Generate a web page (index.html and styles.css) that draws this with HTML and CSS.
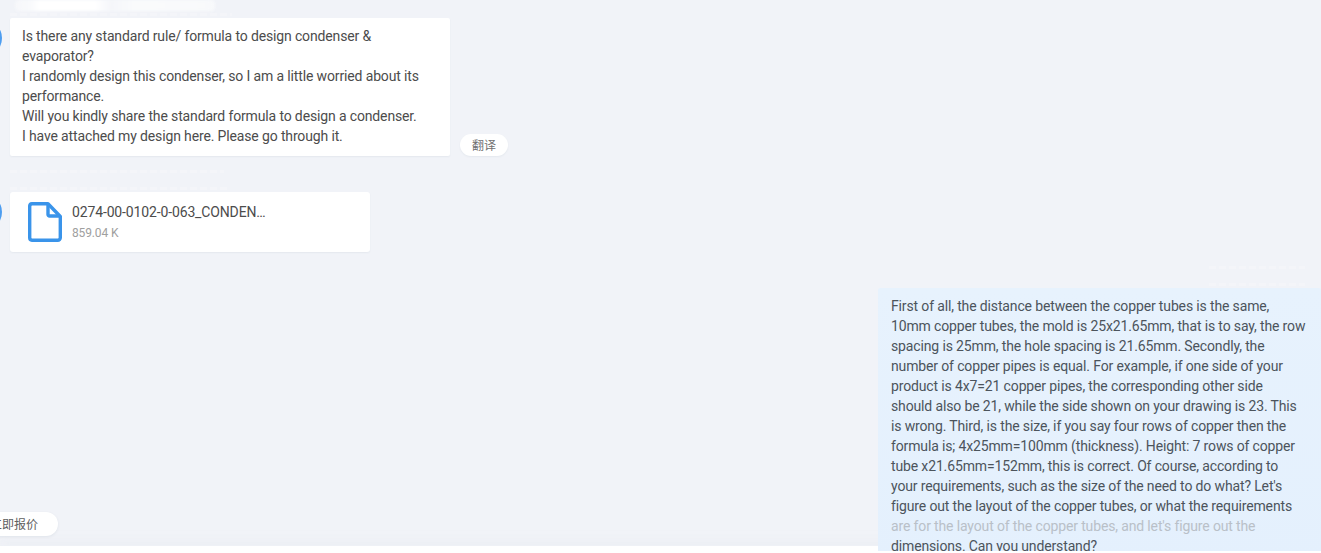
FILE: index.html
```html
<!DOCTYPE html>
<html lang="en">
<head>
<meta charset="utf-8">
<title>Chat</title>
<link rel="stylesheet" href="styles.css">
</head>
<body>
<div class="app">
  <div class="chat">
    <div class="redacted"></div>
    <div class="meta meta-first"></div>
    <div class="row">
      <span class="avatar"></span>
      <div class="bubble bubble-in">Is there any standard rule/ formula to design condenser &amp; evaporator?<br>I randomly design this condenser, so I am a little worried about its performance.<br>Will you kindly share the standard formula to design a condenser.<br>I have attached my design here. Please go through it.</div>
      <button class="translate" type="button">翻译</button>
    </div>
    <div class="meta meta-a"></div>
    <div class="meta meta-b"></div>
    <div class="row">
      <span class="avatar"></span>
      <div class="file-card">
        <svg class="file-icon" viewBox="0 0 34 40" aria-hidden="true">
          <path d="M4 1.700H20L32.300 14.500V35.800a2.500 2.500 0 0 1-2.500 2.500H4A2.500 2.500 0 0 1 1.700 35.800V4A2.500 2.500 0 0 1 4 1.700Z"/>
          <path d="M20 2V12.500A1.500 1.500 0 0 0 21.500 14H32"/>
        </svg>
        <div class="file-info">
          <div class="file-name">0274-00-0102-0-063_CONDEN…</div>
          <div class="file-size">859.04 K</div>
        </div>
      </div>
    </div>
    <div class="meta meta-r1"></div>
    <div class="meta meta-r2"></div>
    <div class="row row-out">
      <div class="bubble bubble-out">First of all, the distance between the copper tubes is the same, 10mm copper tubes, the mold is 25x21.65mm, that is to say, the row spacing is 25mm, the hole spacing is 21.65mm. Secondly, the number of copper pipes is equal. For example, if one side of your product is 4x7=21 copper pipes, the corresponding other side should also be 21, while the side shown on your drawing is 23. This is wrong. Third, is the size, if you say four rows of copper then the formula is; 4x25mm=100mm (thickness). Height: 7 rows of copper tube x21.65mm=152mm, this is correct. Of course, according to your requirements, such as the size of the need to do what? Let's figure out the layout of the copper tubes, or what the requirements <span class="faded">are for the layout of the copper tubes, and let's figure out the</span> dimensions. Can you understand?</div>
    </div>
  </div>
  <button class="quote" type="button">立即报价</button>
  <div class="composer"></div>
</div>
</body>
</html>
```

FILE: styles.css
```css
* { box-sizing: border-box; }

html, body {
  margin: 0;
  height: 100%;
  overflow: hidden;
}

body {
  background: #f1f3f8;
  color: #4c4c4c;
  font-family: Roboto, "Noto Sans CJK SC", sans-serif;
  font-size: 14px;
  line-height: 20px;
  letter-spacing: -0.14px;
}

.app {
  position: relative;
  height: 553px;
  overflow: hidden;
}

.chat {
  position: relative;
  z-index: 1;
  display: flex;
  flex-direction: column;
  height: 551px;
  overflow: hidden;
}

.redacted {
  flex: none;
  width: 200px;
  height: 11px;
  margin-left: 15px;
  border-radius: 4px;
  background: linear-gradient(90deg, #f6f7fa 0, #f9fafc 8%, #ffffff 12%, #ffffff 40%, #f5f6fa 48%, #fafbfc 60%, #f8f9fb 100%);
  filter: blur(1.500px);
}

.meta {
  flex: none;
  height: 3px;
  background: repeating-linear-gradient(90deg, #f4f5f9 0 7px, #f1f3f8 7px 10px);
}

.meta-first { width: 222px; margin: 2px 0 2px 10px; }
.meta-a { width: 214px; margin: 14px 0 0 10px; }
.meta-b { width: 220px; margin: 14px 0 2px 10px; }
.meta-r1 { width: 96px; margin: 14px 16px 0 auto; }
.meta-r2 { width: 96px; margin: 14px 16px 2px auto; }

.row {
  display: flex;
  flex: none;
  align-items: flex-start;
  margin-left: -34px;
}

.row-out {
  justify-content: flex-end;
}

.avatar {
  flex: none;
  width: 36px;
  height: 36px;
  margin: 2px 8px 0 0;
  border-radius: 50%;
  background: #4d9df0;
}

.bubble {
  padding: 8px 12px 10px;
  overflow-wrap: break-word;
}

.bubble-in {
  width: 440px;
  border-radius: 2px;
  background: #fff;
  box-shadow: 0 1px 2px rgba(40, 60, 90, .06);
}

.bubble-out {
  width: 443px;
  padding: 8px 14px 10px 13px;
  border-radius: 2px;
  background: linear-gradient(180deg, #e7f2fd 0, #e4f0fd 100%);
  color: #4c545c;
}

.faded {
  color: #b9c0c8;
}

.translate {
  flex: none;
  align-self: flex-end;
  width: 48px;
  height: 22px;
  margin: 0 0 0 10px;
  padding: 0;
  border: 0;
  border-radius: 11px;
  background: #fff;
  box-shadow: 0 1px 2px rgba(40, 60, 90, .06);
  color: #707070;
  font: 12px/22px "Noto Sans CJK SC", sans-serif;
}

.file-card {
  display: flex;
  align-items: center;
  gap: 10px;
  width: 360px;
  height: 60px;
  padding: 0 18px;
  border-radius: 3px;
  background: #fff;
  box-shadow: 0 1px 2px rgba(40, 60, 90, .06);
}

.file-icon {
  flex: none;
  width: 34px;
  height: 40px;
}

.file-icon path {
  fill: none;
  stroke: #3a94ea;
  stroke-width: 3.400;
  stroke-linejoin: round;
}

.file-info {
  display: flex;
  flex-direction: column;
  gap: 2px;
}

.file-name {
  font-size: 14px;
  line-height: 20px;
}

.file-size {
  color: #a0a0a0;
  font-size: 12px;
  line-height: 18px;
}

.quote {
  position: absolute;
  left: -22px;
  top: 512px;
  z-index: 2;
  width: 80px;
  height: 24px;
  padding: 0 0 0 12px;
  border: 0;
  border-radius: 12px;
  background: #fff;
  box-shadow: 0 1px 3px rgba(40, 60, 90, .08);
  color: #606060;
  font: 12px/24px "Noto Sans CJK SC", sans-serif;
  text-align: left;
}

.composer {
  position: absolute;
  left: 0;
  right: 0;
  bottom: 0;
  height: 7px;
  background: #fff;
  box-shadow: 0 -6px 8px rgba(230, 232, 238, .35);
}
```
